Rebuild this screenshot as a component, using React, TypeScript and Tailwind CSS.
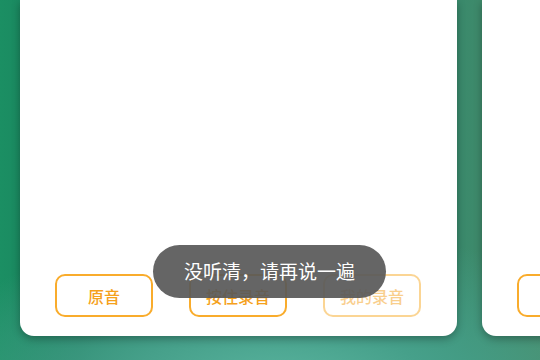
import React from "react";

const font = { fontFamily: '"Noto Sans CJK SC", "Noto Sans", sans-serif' };

function Btn({ label, faded }: { label: string; faded?: boolean }) {
  return (
    <div
      className={`w-[98px] h-[43px] shrink-0 rounded-[10px] border-2 border-[#f9ac2c] flex items-center justify-center text-[16px] font-medium text-[#f5a11c] ${faded ? "opacity-50" : ""}`}
    >
      {label}
    </div>
  );
}

function Card() {
  return (
    <div className="w-[437px] h-[336px] shrink-0 bg-white rounded-b-[14px] shadow-[0_3px_8px_rgba(0,0,0,0.3)] flex flex-col justify-end pb-[19px]">
      <div className="flex px-[35px] gap-[36px]">
        <Btn label="原音" />
        <Btn label="按住录音" />
        <Btn label="我的录音" faded />
      </div>
    </div>
  );
}

export default function App() {
  return (
    <div
      style={font}
      className="relative w-[540px] h-[360px] overflow-hidden bg-[radial-gradient(ellipse_70%_45%_at_52%_108%,#5bb5a0_0%,#46a08a_40%,rgba(40,130,100,0)_100%),linear-gradient(90deg,#1b8f63_0%,#1a7c5c_15%,#2a8a6c_50%,#3a8a6c_85%,#4a8a68_100%)]"
    >
      <div className="flex pl-[20px] gap-[25px]">
        <Card />
        <Card />
      </div>
      <div className="absolute left-[153px] top-[245px] w-[233px] h-[53px] rounded-full bg-[rgba(88,88,88,0.92)] flex items-center justify-center text-white text-[19px]">
        没听清，请再说一遍
      </div>
    </div>
  );
}
